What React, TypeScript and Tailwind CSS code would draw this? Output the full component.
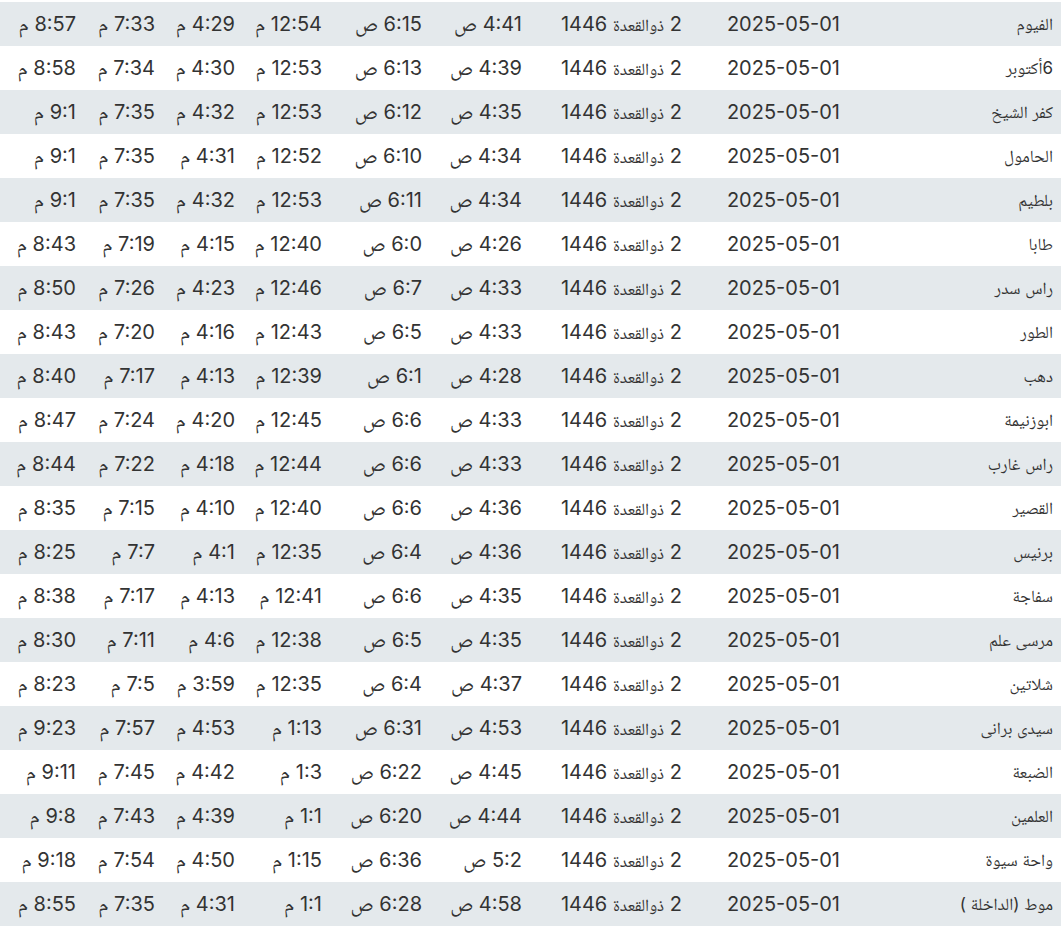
const rows: string[][] = [
  ["الفيوم", "4:41 ص", "6:15 ص", "12:54 م", "4:29 م", "7:33 م", "8:57 م"],
  ["6أكتوبر", "4:39 ص", "6:13 ص", "12:53 م", "4:30 م", "7:34 م", "8:58 م"],
  ["كفر الشيخ", "4:35 ص", "6:12 ص", "12:53 م", "4:32 م", "7:35 م", "9:1 م"],
  ["الحامول", "4:34 ص", "6:10 ص", "12:52 م", "4:31 م", "7:35 م", "9:1 م"],
  ["بلطيم", "4:34 ص", "6:11 ص", "12:53 م", "4:32 م", "7:35 م", "9:1 م"],
  ["طابا", "4:26 ص", "6:0 ص", "12:40 م", "4:15 م", "7:19 م", "8:43 م"],
  ["راس سدر", "4:33 ص", "6:7 ص", "12:46 م", "4:23 م", "7:26 م", "8:50 م"],
  ["الطور", "4:33 ص", "6:5 ص", "12:43 م", "4:16 م", "7:20 م", "8:43 م"],
  ["دهب", "4:28 ص", "6:1 ص", "12:39 م", "4:13 م", "7:17 م", "8:40 م"],
  ["ابوزنيمة", "4:33 ص", "6:6 ص", "12:45 م", "4:20 م", "7:24 م", "8:47 م"],
  ["راس غارب", "4:33 ص", "6:6 ص", "12:44 م", "4:18 م", "7:22 م", "8:44 م"],
  ["القصير", "4:36 ص", "6:6 ص", "12:40 م", "4:10 م", "7:15 م", "8:35 م"],
  ["برنيس", "4:36 ص", "6:4 ص", "12:35 م", "4:1 م", "7:7 م", "8:25 م"],
  ["سفاجة", "4:35 ص", "6:6 ص", "12:41 م", "4:13 م", "7:17 م", "8:38 م"],
  ["مرسى علم", "4:35 ص", "6:5 ص", "12:38 م", "4:6 م", "7:11 م", "8:30 م"],
  ["شلاتين", "4:37 ص", "6:4 ص", "12:35 م", "3:59 م", "7:5 م", "8:23 م"],
  ["سيدى برانى", "4:53 ص", "6:31 ص", "1:13 م", "4:53 م", "7:57 م", "9:23 م"],
  ["الضبعة", "4:45 ص", "6:22 ص", "1:3 م", "4:42 م", "7:45 م", "9:11 م"],
  ["العلمين", "4:44 ص", "6:20 ص", "1:1 م", "4:39 م", "7:43 م", "9:8 م"],
  ["واحة سيوة", "5:2 ص", "6:36 ص", "1:15 م", "4:50 م", "7:54 م", "9:18 م"],
  ["موط (الداخلة )", "4:58 ص", "6:28 ص", "1:1 م", "4:31 م", "7:35 م", "8:55 م"],
];

function Time({ value }: { value: string }) {
  const [num, suffix] = value.split(" ");
  return (
    <>
      {num} <span className="text-[21px]">{suffix}</span>
    </>
  );
}

export default function App() {
  return (
    <div className="w-[1061px] bg-white pt-[2px]">
      <table
        dir="rtl"
        className="w-full table-fixed border-collapse text-[20px] leading-[28px] text-[#333] font-['Inter','Noto_Naskh_Arabic',sans-serif]"
      >
        <colgroup>
          <col className="w-[213px]" />
          <col className="w-[158px]" />
          <col className="w-[160px]" />
          <col className="w-[100px]" />
          <col className="w-[100px]" />
          <col className="w-[87px]" />
          <col className="w-[80px]" />
          <col className="w-[79px]" />
          <col className="w-[84px]" />
        </colgroup>
        <tbody>
          {rows.map((r, i) => (
            <tr key={i} className={i % 2 === 0 ? "h-[44px] bg-[#e4e9ec]" : "h-[44px] bg-white"}>
              <td className="pr-2 text-right text-[17px] whitespace-nowrap">{r[0]}</td>
              <td className="pr-2 text-right whitespace-nowrap">2025-05-01</td>
              <td className="pr-2 text-right whitespace-nowrap">
                2 <span className="text-[17px]">ذوالقعدة</span> 1446
              </td>
              {r.slice(1).map((t, j) => (
                <td key={j} className="pr-2 text-right whitespace-nowrap">
                  <Time value={t} />
                </td>
              ))}
            </tr>
          ))}
        </tbody>
      </table>
    </div>
  );
}
